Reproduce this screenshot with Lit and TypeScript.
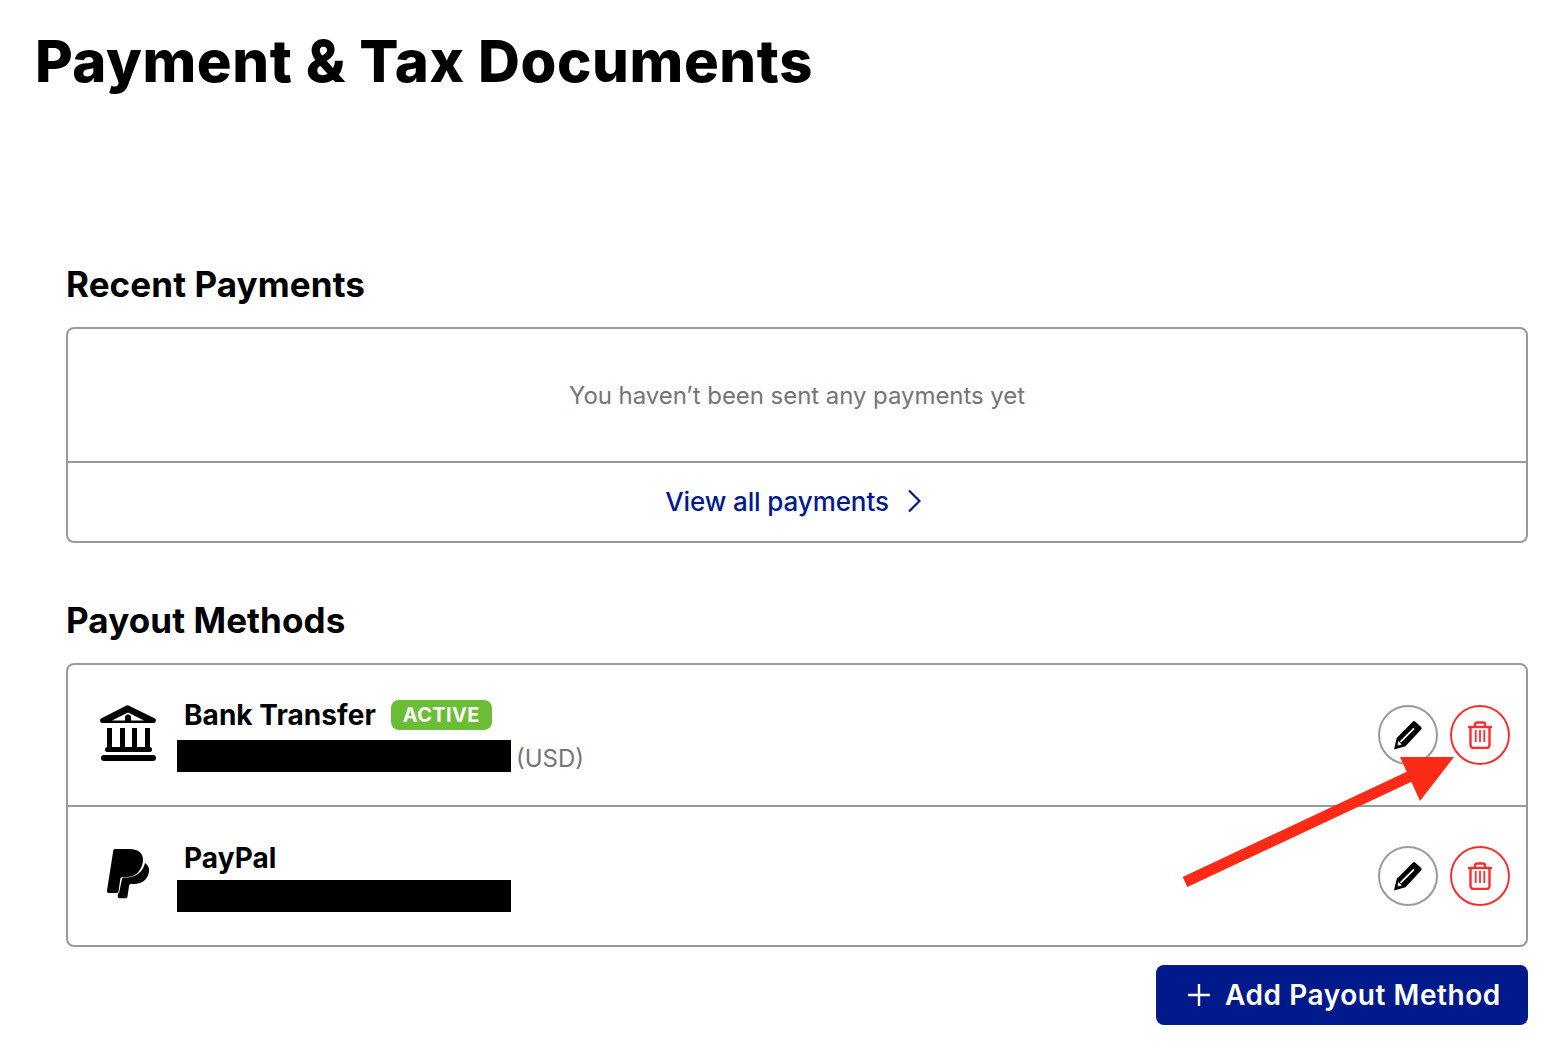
import { LitElement, html, css, svg } from "lit";
import { customElement } from "lit/decorators.js";

const pencil = svg`<svg class="ic" width="30" height="30" viewBox="0 0 30 30"><path d="M22.300 1.700 28 6.800a2 2 0 0 1 .1 2.800L12.500 26.300 1 29.500 3.700 18 19.500 1.900a2 2 0 0 1 2.800-.2Z" fill="#000"/><path d="M7.500 21.800 21 8.300" stroke="#fff" stroke-width="1.800" fill="none"/><path d="M5.300 21 8.800 24.500 4.300 25.700Z" fill="#fff"/><path d="M4.600 24 5.900 25.300 4 25.900Z" fill="#000"/></svg>`;
const trash = svg`<svg class="ic" width="26" height="28" viewBox="0 0 26 28" fill="none" stroke="#fb2e2e" stroke-width="2.400"><path d="M1 6h24"/><path d="M8 6V3.500A2 2 0 0 1 10 1.500h6a2 2 0 0 1 2 2V6"/><path d="M3.500 6v18a3 3 0 0 0 3 3h13a3 3 0 0 0 3-3V6"/><path d="M8.700 9v12M13 9v12M17.300 9v12" stroke-width="1.800"/></svg>`;

@customElement("app-root")
export class AppRoot extends LitElement {
  static styles = css`
    :host { display: block; position: relative; height: 1052px; overflow: hidden; background: #fff; color: #000; font-family: Inter, "Liberation Sans", sans-serif; }
    h1 { margin: 0; padding: 26px 0 0 35px; font-size: 58px; line-height: 70px; font-weight: 800; letter-spacing: 0.6px; }
    main { padding: 0 20px 0 66px; }
    h2 { margin: 0; font-size: 35px; line-height: 42px; font-weight: 700; letter-spacing: 0.1px; }
    .recent-title { margin-top: 167px; }
    .payout-title { margin-top: 56px; }
    .card { border: 2px solid #9a9a9a; border-radius: 8px; margin-top: 22px; }
    .empty { height: 132px; display: flex; align-items: center; justify-content: center; font-size: 24px; color: #757575; letter-spacing: -0.06px; border-bottom: 2px solid #9a9a9a; }
    .view { height: 78px; display: flex; align-items: center; justify-content: center; gap: 18px; color: #001a8c; font-size: 26px; font-weight: 500; letter-spacing: -0.1px; padding: 0 8px 2px 0; box-sizing: border-box; }
    .row { height: 140px; display: flex; align-items: flex-start; padding: 35px 16px 0 30px; box-sizing: border-box; }
    .row + .row { border-top: 2px solid #9a9a9a; height: 140px; }
    .row + .row .acct { margin-top: 6px; }
    .logo { width: 60px; flex: none; display: flex; justify-content: center; margin-right: 19px; align-self: center; padding-bottom: 6px; margin-top: -35px; }
    .info { flex: 1; display: flex; flex-direction: column; }
    .name { display: flex; align-items: center; gap: 15px; padding-left: 7px; height: 32px; font-size: 28px; font-weight: 700; letter-spacing: 0.05px; }
    .badged { position: relative; top: -1px; }
    .badge { background: #6cbd36; color: #fff; border-radius: 8px; height: 30px; padding: 0 12px; display: flex; align-items: center; font-size: 20px; font-weight: 700; letter-spacing: 0.3px; position: relative; top: -1px; }
    .acct { display: flex; align-items: center; gap: 5px; margin-top: 7px; color: #757575; font-size: 24px; }
    .usd { padding-top: 5px; }
    .redact { width: 334px; height: 32px; background: #000; }
    .actions { display: flex; gap: 12px; align-self: center; margin-top: -35px; }
    .round { width: 60px; height: 60px; box-sizing: border-box; border-radius: 50%; border: 2px solid #9a9a9a; display: flex; align-items: center; justify-content: center; background: #fff; }
    .round.del { border-color: #fb2e2e; }
    .foot { display: flex; justify-content: flex-end; margin-top: 18px; }
    .add { width: 372px; height: 60px; box-sizing: border-box; padding: 0 0 0 4px; background: #001a8c; color: #fff; border: 0; border-radius: 8px; display: flex; align-items: center; justify-content: center; gap: 14px; font: 600 28px Inter, "Liberation Sans", sans-serif; letter-spacing: 0.55px; }
    .arrow { position: absolute; left: 0; top: 0; pointer-events: none; }
  `;

  row(logo: unknown, name: string, badge: boolean, usd: boolean) {
    return html`<div class="row">
      <div class="logo">${logo}</div>
      <div class="info">
        <div class="name">${badge ? html`<span class="badged">${name}</span><span class="badge">ACTIVE</span>` : name}</div>
        <div class="acct"><span class="redact"></span>${usd ? html`<span class="usd">(USD)</span>` : ""}</div>
      </div>
      <div class="actions">
        <div class="round">${pencil}</div>
        <div class="round del">${trash}</div>
      </div>
    </div>`;
  }

  render() {
    const bank = svg`<svg width="58" height="58" viewBox="0 0 58 58"><path d="M27.500 2.500a2 2 0 0 1 2 0L56 15.500c1.500.8 1 4.500-1 4.500H3c-2 0-2.500-3.700-1-4.500Z" fill="#000"/><path d="M29 9.500 13 17.500h32Z" fill="#fff"/><circle cx="29" cy="14.500" r="3" fill="#000"/><rect x="26" y="14.500" width="6" height="3.500" fill="#000"/><path d="M8 25h5v20H8zM21 25h5v20h-5zM33 25h5v20h-5zM46 25h5v20h-5z" fill="#000"/><rect x="6" y="44" width="47" height="5" rx="2.500" fill="#000"/><rect x="2" y="52" width="55" height="6" rx="3" fill="#000"/></svg>`;
    const paypal = svg`<svg width="46" height="52" viewBox="0 0 46 52"><path d="M10 2h14c9 0 14 4 14 10.500 0 1.500-.2 3-.6 4.500C35 26 29 30 21 30h-3.500c-1 0-2 .8-2.200 2L13.500 44.500c-.1.800-.8 1.500-1.700 1.500H3.500C2.500 46 1.800 45 2 43.500L8.300 3.500C8.500 2.600 9.200 2 10 2Z" fill="#000"/><path d="M40 16c3 2 4.500 5 4 8.500-1 8-7 12.500-15.500 12.500h-2.500c-1 0-1.700.7-1.900 1.600L22.500 49.500c-.2 1-1 1.700-2 1.700h-6c-1.200 0-2-1-1.800-2.200l.4-2.500.9-.6 3-14c.2-1 .7-1.300 1.500-1.300H21c9 0 17-5 19-14.500Z" fill="#000"/></svg>`;
    return html`
      <h1>Payment &amp; Tax Documents</h1>
      <main>
        <h2 class="recent-title">Recent Payments</h2>
        <div class="card">
          <div class="empty">You haven’t been sent any payments yet</div>
          <div class="view">View all payments
            <svg width="14" height="24" viewBox="0 0 14 24" fill="none" stroke="#001a8c" stroke-width="2.200"><path d="M2 1.500 12.500 12 2 22.500"/></svg>
          </div>
        </div>
        <h2 class="payout-title">Payout Methods</h2>
        <div class="card">
          ${this.row(bank, "Bank Transfer", true, true)}
          ${this.row(paypal, "PayPal", false, false)}
        </div>
        <div class="foot">
          <button class="add">
            <svg width="24" height="24" viewBox="0 0 24 24" stroke="#fff" stroke-width="2.400"><path d="M12 1v22M1 12h22"/></svg>
            Add Payout Method
          </button>
        </div>
      </main>
      <svg class="arrow" width="1548" height="1052" viewBox="0 0 1548 1052">
        <path d="M1185 882 1415 774" stroke="#fc2a17" stroke-width="11" fill="none"/>
        <path d="M1400 757H1454L1420 801Z" fill="#fc2a17"/>
      </svg>
    `;
  }
}
